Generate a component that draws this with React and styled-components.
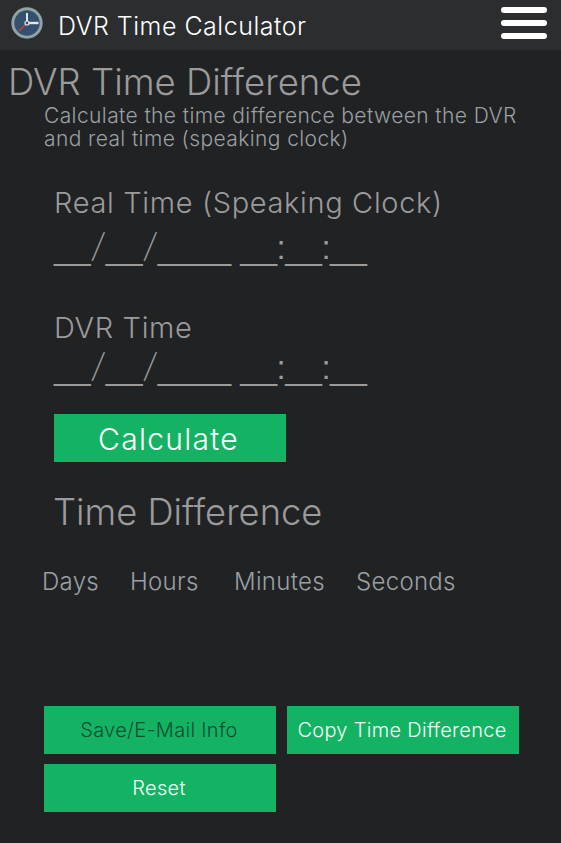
import React from "react";
import styled, { createGlobalStyle } from "styled-components";

const FONT = `"Inter", "Lato", "Liberation Sans", sans-serif`;

const Global = createGlobalStyle`
  html, body { margin: 0; padding: 0; background: #212224; }
  body { font-family: ${FONT}; }
`;
const Page = styled.div`
  width: 561px; height: 843px; overflow: hidden; background: #212224;
`;
const Header = styled.header`
  height: 50px; background: #2c2d2f; display: flex; align-items: center;
  padding: 0 14px 0 11px; box-sizing: border-box;
`;
const Logo = styled.svg`
  width: 32px; height: 32px; flex: none; margin-top: -5px;
`;
const AppName = styled.div`
  color: #fff; font-size: 25px; font-weight: 300; letter-spacing: 0.5px; margin-left: 15px; flex: 1; margin-top: 1px;
`;
const Burger = styled.div`
  width: 46px; display: flex; flex-direction: column; gap: 6.5px; margin-top: -4px;
`;
const BurgerBar = styled.span`
  display: block; height: 6.5px; border-radius: 4px; background: #fff;
`;
const Title = styled.h1`
  margin: 0; padding: 10px 0 0 8px; font-weight: 300; font-size: 36.5px; line-height: 44px;
  color: #9b9b9b;
`;
const Subtitle = styled.p`
  margin: 0; padding: 0 30px 0 44px; font-weight: 300; font-size: 21px; line-height: 23px;
  letter-spacing: 0.4px; color: #9aa0a3;
`;
const Form = styled.section`
  padding: 37px 0 0 54px;
`;
const Label = styled.div`
  font-size: 29px; font-weight: 300; line-height: 32px; letter-spacing: 0.65px; color: #9b9b9b;
`;
const Mask = styled.div`
  font: 400 33px/30px "Liberation Sans", sans-serif; color: #9b9b9b;
  margin: ${(p) => p.$top}px 0 ${(p) => p.$bottom}px; white-space: nowrap; height: 30px;
`;
const Slash = styled.span`
  font: 300 38px/30px "Lato", sans-serif; margin: 0 -0.7px;
`;
const Colon = styled.span`
  margin: 0 -0.5px;
`;
const CalcButton = styled.button`
  display: block; width: 232px; height: 48px; margin: 0; border: 0; background: #14b364; color: #fff;
  font: 300 30px/48px ${FONT}; letter-spacing: 1.3px; padding: 1px 3px 0 0;
`;
const ResultTitle = styled.h2`
  margin: 28px 0 0 -1px; font-weight: 300; font-size: 36.3px; line-height: 44px; color: #9b9b9b;
`;
const Units = styled.div`
  display: flex; padding: 30px 0 0 42px; height: 36px;
`;
const Unit = styled.div`
  width: ${(p) => p.$w}px; font-size: 24px; line-height: 36px; font-weight: 300; letter-spacing: 0.3px; color: #9aa0a3;
`;
const Actions = styled.div`
  display: grid; grid-template-columns: 232px 232px; gap: 10px 11px; padding: 106px 0 0 44px;
`;
const ActionButton = styled.button`
  height: 48px; border: 0; padding: 0 2px 0 0; background: #14b364; color: ${(p) => p.$dark ? "#0a4f30" : "#f2fff8"};
  font: 300 20px/48px ${FONT}; letter-spacing: 0.3px;
`;

const MaskText = () => (
  <>__<Slash>/</Slash>__<Slash>/</Slash>____ __<Colon>:</Colon>__<Colon>:</Colon>__</>
);

export default function App() {
  return (
    <Page>
      <Global />
      <Header>
        <Logo viewBox="0 0 32 32">
          <circle cx="16" cy="16" r="14.2" fill="#34506e" stroke="#8fa3a5" strokeWidth="3" />
          <path d="M16 16V6" stroke="#dfe6e6" strokeWidth="2" />
          <path d="M16 16H27.5" stroke="#dfe6e6" strokeWidth="2.4" />
          <path d="M16 16L8 24" stroke="#c4402f" strokeWidth="1.6" />
          <circle cx="16" cy="16" r="2" fill="#34506e" stroke="#dfe6e6" strokeWidth="1.2" />
        </Logo>
        <AppName>DVR Time Calculator</AppName>
        <Burger>
          <BurgerBar />
          <BurgerBar />
          <BurgerBar />
        </Burger>
      </Header>
      <Title>DVR Time Difference</Title>
      <Subtitle>Calculate the time difference between the DVR and real time (speaking clock)</Subtitle>
      <Form>
        <Label>Real Time (Speaking Clock)</Label>
        <Mask $top={10} $bottom={53}><MaskText /></Mask>
        <Label>DVR Time</Label>
        <Mask $top={5} $bottom={35}><MaskText /></Mask>
        <CalcButton>Calculate</CalcButton>
        <ResultTitle>Time Difference</ResultTitle>
      </Form>
      <Units>
        <Unit $w={88}>Days</Unit>
        <Unit $w={104}>Hours</Unit>
        <Unit $w={122}>Minutes</Unit>
        <Unit $w={110}>Seconds</Unit>
      </Units>
      <Actions>
        <ActionButton $dark>Save/E-Mail Info</ActionButton>
        <ActionButton>Copy Time Difference</ActionButton>
        <ActionButton>Reset</ActionButton>
      </Actions>
    </Page>
  );
}
